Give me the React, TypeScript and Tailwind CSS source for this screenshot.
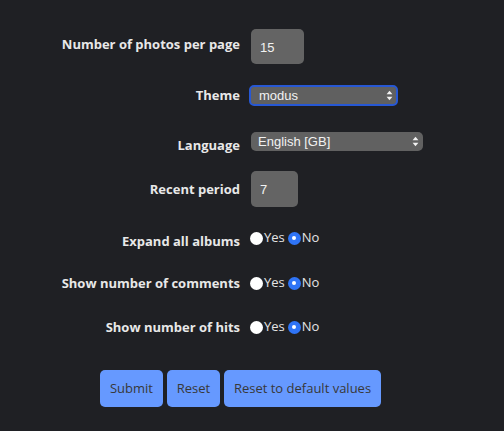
import React from "react";

function Arrows() {
  return (
    <svg width="7" height="11" viewBox="0 0 7 11" className="block">
      <path d="M3.5 0.8 L6.4 4.3 L0.6 4.3 Z" fill="#f2f2f2" />
      <path d="M3.5 10.2 L6.4 6.7 L0.6 6.7 Z" fill="#f2f2f2" />
    </svg>
  );
}

function Radio({ checked }: { checked: boolean }) {
  return checked ? (
    <span className="flex h-[13px] w-[13px] items-center justify-center rounded-full bg-[#2f74f6]">
      <span className="h-[4px] w-[4px] rounded-full bg-white" />
    </span>
  ) : (
    <span className="h-[13px] w-[13px] rounded-full bg-white" />
  );
}

function YesNo() {
  return (
    <div className="flex items-center text-[13px] text-[#e4e4e4]">
      <Radio checked={false} />
      <span className="ml-[1px]">Yes</span>
      <span className="ml-[3px]" />
      <Radio checked={true} />
      <span className="ml-[1px]">No</span>
    </div>
  );
}

function Label({ children, offset = "" }: { children: React.ReactNode; offset?: string }) {
  return (
    <div className={`w-[240px] shrink-0 text-right font-bold text-[13px] text-[#e8e8e8] ${offset}`}>
      {children}
    </div>
  );
}

export default function App() {
  return (
    <div className="min-h-screen bg-[#1f2024] font-['Open_Sans',sans-serif]">
      <div className="flex flex-col pt-[29px]">
        <div className="flex h-[35px] items-center">
          <Label offset="-mt-[4px]">Number of photos per page</Label>
          <div className="ml-[11px] flex h-[35px] w-[53px] items-center rounded-[5px] bg-[#646464] pl-[9px] pt-[3px] font-['Liberation_Sans',sans-serif] text-[13px] text-[#f2f2f2]">
            15
          </div>
        </div>

        <div className="mt-[21px] flex h-[21px] items-center">
          <Label>Theme</Label>
          <div className="ml-[9px] flex h-[21px] w-[149px] items-center justify-between rounded-[5px] border-[2px] border-[#2758d4] bg-[#606060] pl-[8px] pr-[3px] font-['Liberation_Sans',sans-serif] text-[13px] text-[#f2f2f2]">
            <span>modus</span>
            <Arrows />
          </div>
        </div>

        <div className="mt-[26px] flex h-[19px] items-center">
          <Label offset="mt-[9px]">Language</Label>
          <div className="ml-[11px] flex h-[19px] w-[172px] items-center justify-between rounded-[5px] bg-[#616161] pl-[7px] pr-[4px] font-['Liberation_Sans',sans-serif] text-[13px] text-[#f2f2f2]">
            <span>English [GB]</span>
            <Arrows />
          </div>
        </div>

        <div className="mt-[20px] flex h-[36px] items-center">
          <Label offset="mt-[2px]">Recent period</Label>
          <div className="ml-[11px] flex h-[36px] w-[47px] items-start rounded-[5px] bg-[#646464] pl-[9px] pt-[9px] font-['Liberation_Sans',sans-serif] text-[13px] text-[#f2f2f2]">
            7
          </div>
        </div>

        <div className="mt-[23px] flex h-[16px] items-center">
          <Label offset="mt-[8px]">Expand all albums</Label>
          <div className="ml-[10px]">
            <YesNo />
          </div>
        </div>

        <div className="mt-[29px] flex h-[16px] items-center">
          <Label offset="mt-[1px]">Show number of comments</Label>
          <div className="ml-[10px]">
            <YesNo />
          </div>
        </div>

        <div className="mt-[28px] flex h-[16px] items-center">
          <Label offset="mt-[1px]">Show number of hits</Label>
          <div className="ml-[10px]">
            <YesNo />
          </div>
        </div>

        <div className="mt-[35px] flex gap-[4px] pl-[100px]">
          <button className="h-[37px] w-[63px] rounded-[5px] bg-[#6699ff] text-[13px] text-[#383838]">
            Submit
          </button>
          <button className="h-[37px] w-[53px] rounded-[5px] bg-[#6699ff] text-[13px] text-[#383838]">
            Reset
          </button>
          <button className="h-[37px] w-[157px] rounded-[5px] bg-[#6699ff] text-[13px] text-[#383838]">
            Reset to default values
          </button>
        </div>
      </div>
    </div>
  );
}
